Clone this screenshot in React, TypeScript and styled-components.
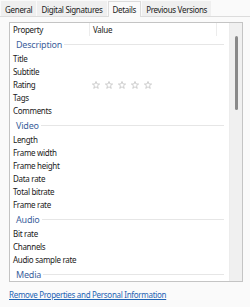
import React from "react";
import styled, { createGlobalStyle } from "styled-components";

const GlobalStyle = createGlobalStyle`
  body {
    margin: 0;
    background: #fafafa;
    font-family: "Noto Sans", "Liberation Sans", sans-serif;
    color: #1a1a1a;
    letter-spacing: -0.3px;
  }
`;

const Page = styled.div`
  width: 250px;
  height: 307px;
  overflow: hidden;
  display: flex;
  flex-direction: column;
`;

const TabBar = styled.div`
  display: flex;
  align-items: flex-end;
  height: 16px;
  padding-left: 1px;
  gap: 1px;
  border-bottom: 1px solid #dcdcdc;
`;

const Tab = styled.div<{ $active?: boolean }>`
  height: ${(p) => (p.$active ? "16px" : "15px")};
  padding: 0 ${(p) => (p.$active ? "4px" : "3px")};
  display: flex;
  align-items: center;
  font-size: 8px;
  background: ${(p) => (p.$active ? "#fafafa" : "#efefef")};
  border: 1px solid ${(p) => (p.$active ? "#dcdcdc" : "#efefef")};
  border-bottom: none;
  margin-bottom: ${(p) => (p.$active ? "-1px" : "0")};
  box-sizing: border-box;
`;

const Content = styled.div`
  padding: 5px 7px 0 9px;
  display: flex;
  flex-direction: column;
`;

const ListBox = styled.div`
  height: 260px;
  box-sizing: border-box;
  border: 1px solid #c4c4c4;
  background: #fff;
  display: flex;
`;

const List = styled.div`
  flex: 1;
  overflow: hidden;
  display: flex;
  flex-direction: column;
`;

const HeaderRow = styled.div`
  display: flex;
  height: 13px;
  font-size: 8px;
  align-items: center;
  flex-shrink: 0;
`;

const HeaderCell = styled.div<{ $w: number }>`
  width: ${(p) => p.$w}px;
  padding-left: 3px;
  box-sizing: border-box;
  height: 100%;
  display: flex;
  align-items: center;
  border-right: 1px solid #ececec;
`;

const GroupHeader = styled.div`
  display: flex;
  align-items: center;
  height: 16px;
  padding: 0 5px 0 6px;
  flex-shrink: 0;
`;

const GroupTitle = styled.span`
  font-size: 9px;
  letter-spacing: -0.2px;
  color: #3d5f9c;
`;

const GroupLine = styled.div`
  flex: 1;
  height: 1px;
  background: #e6e6e6;
  margin-left: 2px;
`;

const Row = styled.div`
  display: flex;
  align-items: center;
  height: 13px;
  font-size: 8px;
  flex-shrink: 0;
`;

const Label = styled.div`
  width: 80px;
  padding-left: 3px;
  box-sizing: border-box;
`;

const Stars = styled.div`
  display: flex;
  gap: 5px;
  padding-left: 2px;
`;

const Scrollbar = styled.div`
  width: 12px;
  background: #f0f0f0;
  border-left: 1px solid #ececec;
  position: relative;
`;

const Thumb = styled.div`
  position: absolute;
  left: 5px;
  top: 13px;
  width: 3px;
  height: 74px;
  border-radius: 2px;
  background: #8a8a8a;
`;

const Link = styled.a`
  margin-top: 7px;
  font-size: 8px;
  color: #1f64b4;
  text-decoration: underline;
  cursor: pointer;
`;

const Star = () => (
  <svg width="8" height="8" viewBox="0 0 10 10">
    <path
      d="M5 0.6 L6.2 3.7 L9.5 3.8 L6.9 5.9 L7.8 9.2 L5 7.3 L2.2 9.2 L3.1 5.9 L0.5 3.8 L3.8 3.7 Z"
      fill="none"
      stroke="#b3b3b3"
      strokeWidth="0.8"
      strokeLinejoin="round"
    />
  </svg>
);

const groups = [
  { title: "Description", rows: ["Title", "Subtitle", "Rating", "Tags", "Comments"] },
  {
    title: "Video",
    rows: ["Length", "Frame width", "Frame height", "Data rate", "Total bitrate", "Frame rate"],
  },
  { title: "Audio", rows: ["Bit rate", "Channels", "Audio sample rate"] },
  { title: "Media", rows: [] as string[] },
];

const tabs = ["General", "Digital Signatures", "Details", "Previous Versions"];

const App = () => {
  return (
    <Page>
      <GlobalStyle />
      <TabBar>
        {tabs.map((t) => (
          <Tab key={t} $active={t === "Details"}>
            {t}
          </Tab>
        ))}
      </TabBar>
      <Content>
        <ListBox>
          <List>
            <HeaderRow>
              <HeaderCell $w={80}>Property</HeaderCell>
              <HeaderCell $w={127}>Value</HeaderCell>
            </HeaderRow>
            {groups.map((g) => (
              <React.Fragment key={g.title}>
                <GroupHeader>
                  <GroupTitle>{g.title}</GroupTitle>
                  <GroupLine />
                </GroupHeader>
                {g.rows.map((r) => (
                  <Row key={r}>
                    <Label>{r}</Label>
                    {r === "Rating" && (
                      <Stars>
                        {[0, 1, 2, 3, 4].map((i) => (
                          <Star key={i} />
                        ))}
                      </Stars>
                    )}
                  </Row>
                ))}
              </React.Fragment>
            ))}
          </List>
          <Scrollbar>
            <Thumb />
          </Scrollbar>
        </ListBox>
        <Link>Remove Properties and Personal Information</Link>
      </Content>
    </Page>
  );
};

export default App;
